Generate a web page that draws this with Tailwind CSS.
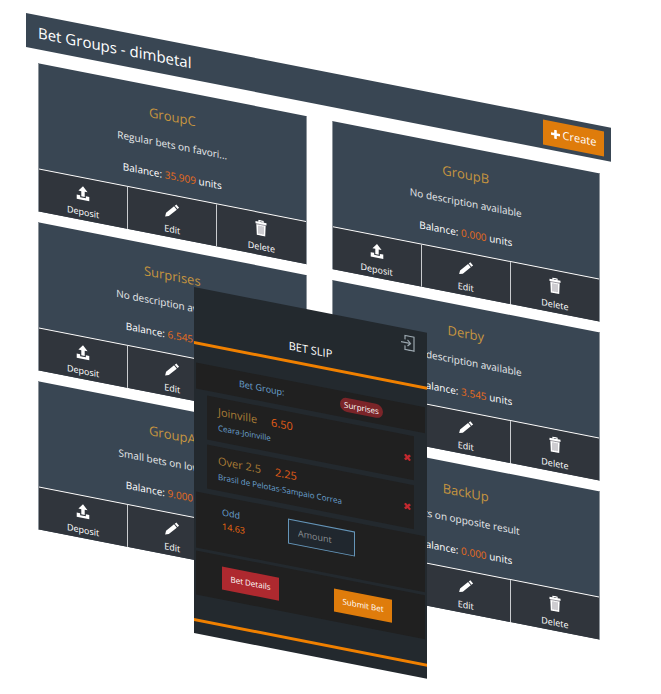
<!DOCTYPE html>
<html lang="en">
<head>
<meta charset="utf-8">
<meta name="viewport" content="width=device-width, initial-scale=1">
<title>Bet Groups</title>
<script src="https://cdn.jsdelivr.net/npm/@tailwindcss/browser@4"></script>
</head>
<body class="min-h-screen overflow-hidden bg-white font-['Open_Sans','Noto_Sans',sans-serif] text-[#e6e8ea]">
<svg class="hidden" aria-hidden="true">
  <symbol id="deposit" viewBox="0 0 14 14"><path fill="currentColor" d="M7 1 11 5.500H8.500V10H5.500V5.500H3ZM1.500 9.200H4.500V11H9.500V9.200H12.500V13H1.500Z"/></symbol>
  <symbol id="edit" viewBox="0 0 14 14"><path fill="currentColor" d="M10.800.9 13.200 3.300 11.800 4.700 9.400 2.300ZM8.800 2.900 11.200 5.300 4.200 12.300 1 13.200 1.800 9.900Z"/></symbol>
  <symbol id="trash" viewBox="0 0 14 16"><path fill="none" stroke="currentColor" stroke-width="1.300" d="M5 2.500V.8H9V2.500"/><path fill="currentColor" d="M1.500 2H12.500V4.200H1.500ZM2.300 4.200H11.700L11.200 15.500H2.800Z"/><path stroke="#77757e" stroke-width=".7" d="M2 4.600H12M5 6V14M7 6V14M9 6V14"/></symbol>
  <symbol id="remove" viewBox="0 0 8 8"><path stroke="currentColor" stroke-width="2.600" d="M1 1 7 7M7 1 1 7"/></symbol>
</svg>
<main class="relative pt-[13px] pr-[50px] pl-[26px]">
  <section class="origin-top-left skew-y-[11.1deg]">
    <header class="flex h-[34px] items-center justify-between bg-[#394653] pr-[7px] pl-3">
      <h1 class="text-[15px] text-white">Bet Groups - dimbetal</h1>
      <button class="flex h-[25px] w-[61px] items-center justify-center gap-[3px] bg-[#df7c0b] text-[11px] text-white">
        <svg class="size-[9px]" viewBox="0 0 9 9"><path stroke="currentColor" stroke-width="2.600" d="M4.500 0V9M0 4.500H9"/></svg>Create</button>
    </header>
    <div id="groups" class="grid grid-cols-2 gap-x-[25px] gap-y-[11px] pt-[14px] pr-[11px] pl-3"></div>
  </section>

  <aside class="absolute top-[287px] left-[194px] w-[233px] origin-top-left skew-y-[11.1deg] bg-[#23292e] text-[9px]">
    <div class="relative flex h-[57px] items-end justify-center border-b-[3px] border-[#f08000] pb-[6px]">
      <h2 class="text-[11px] leading-4 text-white">BET SLIP</h2>
      <button aria-label="Close bet slip" class="absolute top-[6px] right-3 text-[#9aa6ae]">
        <svg class="h-4 w-[14px]" viewBox="0 0 14 16" fill="none" stroke="currentColor" stroke-width="1.200"><path d="M4 5V1H13V15H4V11M0 8H9M6.500 5 9.500 8 6.500 11"/></svg>
      </button>
    </div>
    <div class="flex flex-col gap-[3px] px-[2px] pt-[18px]">
      <div class="flex h-[26px] items-center justify-between bg-[#202020] pr-[42px] pl-[43px]">
        <span class="text-[#6aa0d0]">Bet Group:</span>
        <span class="flex h-[14px] w-[43px] items-center justify-center rounded-full bg-[#7b2529] text-[8px] font-medium text-white">Surprises</span>
      </div>
      <ul class="flex flex-col gap-[5px] px-[11px] py-[2px]">
        <li class="flex h-[44px] items-center justify-between bg-[#202020] pr-[3px] pl-[11px]">
          <div>
            <p class="flex gap-[14px] text-[11px] leading-4 text-[#a87b35]">Joinville <b class="font-normal text-[#e25d17]">6.50</b></p>
            <p class="text-[8px] leading-4 font-medium text-[#6aa0d0]">Ceara-Joinville</p>
          </div>
          <button aria-label="Remove Joinville" class="text-[#c4292f]"><svg class="size-[7px]"><use href="#remove"/></svg></button>
        </li>
        <li class="flex h-[44px] items-center justify-between bg-[#202020] pr-[3px] pl-[11px]">
          <div>
            <p class="flex gap-[14px] text-[11px] leading-4 text-[#a87b35]">Over 2.5 <b class="font-normal text-[#e25d17]">2.25</b></p>
            <p class="text-[8px] leading-4 font-medium text-[#6aa0d0]">Brasil de Pelotas-Sampaio Correa</p>
          </div>
          <button aria-label="Remove Over 2.5" class="text-[#c4292f]"><svg class="size-[7px]"><use href="#remove"/></svg></button>
        </li>
      </ul>
      <div class="flex h-[56px] items-start bg-[#202020] pt-[9px] pl-[26px]">
        <dl class="w-[66px] leading-[14px]">
          <dt class="text-[#6aa0d0]">Odd</dt>
          <dd class="font-medium text-[#f06a10]">14.63</dd>
        </dl>
        <input aria-label="Amount" placeholder="Amount" class="h-[25px] w-[67px] border border-[#6595b8] bg-[#20272e] px-[9px] text-[9px] text-white placeholder:text-[#8a8f93]">
      </div>
      <div class="flex h-[44px] items-center justify-between bg-[#202020] pr-[33px] pl-[26px] text-[8px] font-medium text-white">
        <button class="h-[23px] w-[57px] bg-[#ae292f]">Bet Details</button>
        <button class="h-[23px] w-[58px] bg-[#df7c0b]">Submit Bet</button>
      </div>
    </div>
    <div class="mt-[24px] h-[15px] border-t-[3px] border-[#f08000]"></div>
  </aside>
</main>
<script>
const groups = [
  ['GroupC', 'Regular bets on favori...', '35.909'],
  ['GroupB', 'No description available', '0.000'],
  ['Surprises', 'No description available', '6.545'],
  ['Derby', 'No description available', '3.545'],
  ['GroupA', 'Small bets on low odds', '9.000'],
  ['BackUp', 'Bets on opposite result', '0.000']
];
const action = (icon, size, label) => `
  <button class="flex flex-1 flex-col items-center gap-[5px] pt-[7px] pb-[2px] text-[9px] leading-[12px] font-medium text-white">
    <svg class="${size}"><use href="#${icon}"/></svg>${label}</button>`;
document.getElementById('groups').innerHTML = groups.map(([name, text, balance]) => `
  <article class="border-x border-[#8d949b] bg-[#394653] text-center">
    <div class="h-[105px] pt-[17px]">
      <h2 class="text-[13px] leading-5 text-[#c6953f]">${name}</h2>
      <p class="mt-[10px] text-[10px] leading-4">${text}</p>
      <p class="mt-[15px] text-[10px] leading-4 text-white">Balance: <span class="text-[#ea6c1c]">${balance}</span> units</p>
    </div>
    <div class="flex divide-x divide-[#c9cccf] border-t border-white bg-[#30353c]">
      ${action('deposit', 'size-4', 'Deposit')}
      ${action('edit', 'size-4', 'Edit')}
      ${action('trash', 'h-4 w-[14px]', 'Delete')}
    </div>
  </article>`).join('');
</script>
</body>
</html>
